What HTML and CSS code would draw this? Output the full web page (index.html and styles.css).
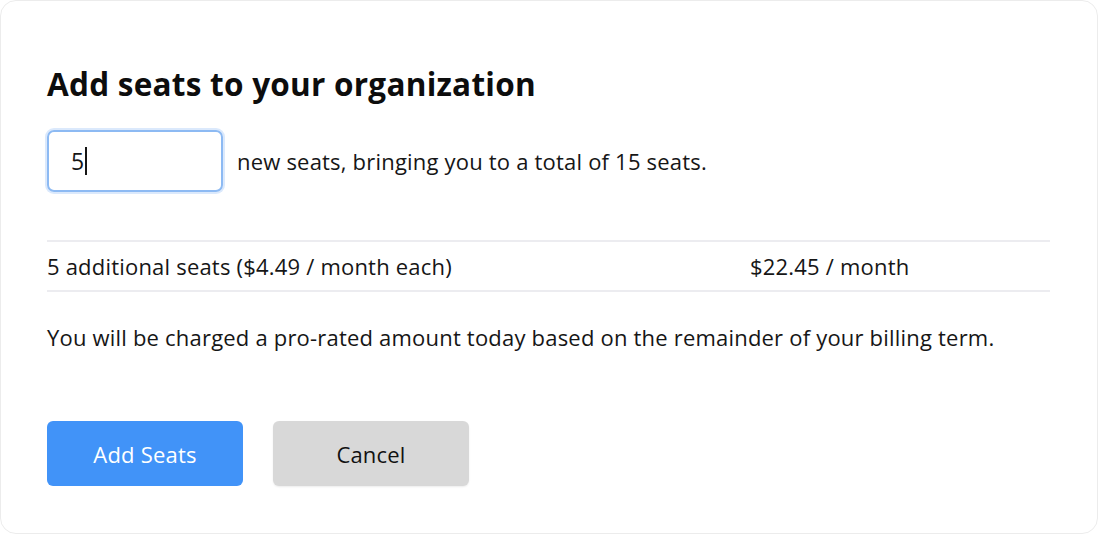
FILE: index.html
```html
<!DOCTYPE html>
<html lang="en">
<head>
<meta charset="utf-8">
<title>Add seats</title>
<link rel="stylesheet" href="styles.css">
</head>
<body>
<div class="card">
  <h1 class="title">Add seats to your organization</h1>
  <div class="seat-line">
    <div class="seat-input"><span class="seat-value">5</span><span class="caret"></span></div>
    <span class="seat-text">new seats, bringing you to a total of 15 seats.</span>
  </div>
  <div class="summary">
    <span class="summary-label">5 additional seats ($4.49 / month each)</span>
    <span class="summary-price">$22.45 / month</span>
  </div>
  <p class="note">You will be charged a pro-rated amount today based on the remainder of your billing term.</p>
  <div class="actions">
    <button class="btn btn-primary">Add Seats</button>
    <button class="btn btn-secondary">Cancel</button>
  </div>
</div>
</body>
</html>
```
FILE: styles.css
```css
html, body {
  margin: 0;
  padding: 0;
  background: #ffffff;
}
body {
  font-family: "Open Sans", "Liberation Sans", sans-serif;
  color: #161616;
  letter-spacing: 0.2px;
}
.card {
  box-sizing: border-box;
  width: 1098px;
  height: 534px;
  border: 1px solid #ececec;
  border-radius: 16px;
  background: #fff;
  padding: 64px 47px 0 46px;
}
.title {
  margin: 0;
  font-family: "Open Sans", sans-serif;
  font-weight: 700;
  font-size: 31.5px;
  line-height: 38px;
  color: #0d0d0d;
  letter-spacing: 0.25px;
}
.seat-line {
  display: flex;
  align-items: center;
  gap: 14px;
  margin-top: 27px;
}
.seat-input {
  box-sizing: border-box;
  width: 176px;
  height: 62px;
  border: 2px solid #8dbaf3;
  box-shadow: 0 0 0 2px #dbe9fc;
  border-radius: 7px;
  display: flex;
  align-items: center;
  padding-left: 22px;
  font-size: 23px;
  color: #161616;
}
.caret {
  display: inline-block;
  width: 1.5px;
  height: 28px;
  background: #161616;
  margin-left: 1px;
}
.seat-text {
  font-size: 22px;
}
.summary {
  display: grid;
  grid-template-columns: 703px 1fr;
  margin-top: 48px;
  border-top: 2px solid #ececf0;
  border-bottom: 2px solid #ececf0;
  height: 52px;
  box-sizing: border-box;
  align-items: center;
  font-size: 22px;
}
.note {
  margin: 30px 0 0;
  font-size: 22px;
  line-height: 30px;
}
.actions {
  display: flex;
  gap: 30px;
  margin-top: 69px;
}
.btn {
  width: 196px;
  height: 65px;
  border: none;
  border-radius: 6px;
  font-family: "Open Sans", "Liberation Sans", sans-serif;
  font-size: 22px;
  letter-spacing: 0.2px;
  cursor: pointer;
}
.btn-primary {
  background: #4193f8;
  color: #fff;
}
.btn-secondary {
  background: #d8d8d8;
  color: #111;
  box-shadow: 0 1px 2px rgba(0,0,0,0.08);
}
```
